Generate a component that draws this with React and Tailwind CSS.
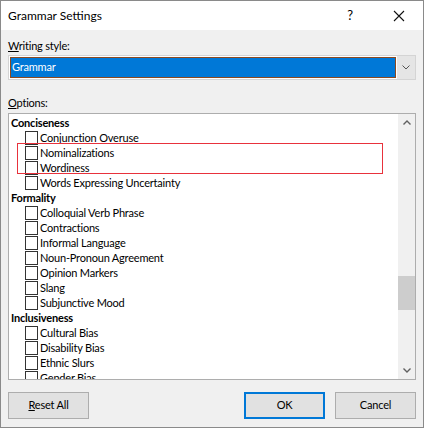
const groups = [
  {
    name: "Conciseness",
    items: ["Conjunction Overuse", "Nominalizations", "Wordiness", "Words Expressing Uncertainty"],
  },
  {
    name: "Formality",
    items: [
      "Colloquial Verb Phrase",
      "Contractions",
      "Informal Language",
      "Noun-Pronoun Agreement",
      "Opinion Markers",
      "Slang",
      "Subjunctive Mood",
    ],
  },
  {
    name: "Inclusiveness",
    items: ["Cultural Bias", "Disability Bias", "Ethnic Slurs", "Gender Bias"],
  },
];

function Row({ label }) {
  return (
    <div className="flex h-[15px] items-center pl-[14px]">
      <span className="h-[14px] w-[13px] shrink-0 border border-[#333] bg-white" />
      <span className="pl-[2px] leading-[15px]">{label}</span>
    </div>
  );
}

export default function App() {
  return (
    <div
      className="flex h-[428px] w-[424px] flex-col border border-[#8a8a8a] bg-[#f0f0f0] text-[11px] tracking-[-0.2px] text-black"
      style={{ fontFamily: '"Segoe UI", Lato, "Noto Sans", sans-serif' }}
    >
      {/* title bar */}
      <div className="flex h-[29px] shrink-0 items-center bg-white pl-[7px] tracking-normal">
        <span className="flex-1 text-[12px]">Grammar Settings</span>
        <span className="mr-[40px] text-[13px]">?</span>
        <svg width="12" height="12" viewBox="0 0 12 12" className="mr-[18px]">
          <path d="M1 1L11 11M11 1L1 11" stroke="#111" strokeWidth="1.1" />
        </svg>
      </div>

      <div className="flex flex-1 flex-col px-[7px]">
        <div className="mt-[8px] leading-[15px]">
          <span className="underline">W</span>riting style:
        </div>
        <div className="mt-[2px] flex h-[25px] border border-[#d4d4d4] bg-white">
          <div className="m-[1px] flex flex-1 items-center border border-[#8b4a22] bg-[#0078d7] pl-[1px] text-white">
            Grammar
          </div>
          <div className="flex w-[18px] items-center justify-center bg-[#e5e5e5]">
            <svg width="8" height="5" viewBox="0 0 8 5">
              <path d="M0.5 0.5L4 4L7.5 0.5" fill="none" stroke="#555" strokeWidth="1" />
            </svg>
          </div>
        </div>

        <div className="mt-[15px] leading-[15px]">
          <span className="underline">O</span>ptions:
        </div>

        <div className="mt-[3px] flex h-[267px] overflow-hidden border border-[#adadad] bg-white">
          <div className="relative flex-1 overflow-hidden pt-[1px] pl-[2px]">
            {groups.map((g) => (
              <div key={g.name}>
                <div className="h-[15px] font-bold leading-[15px]">{g.name}</div>
                {g.items.map((it) => (
                  <Row key={it} label={it} />
                ))}
              </div>
            ))}
            <div className="absolute left-[8px] top-[29px] h-[31px] w-[366px] border-[1.5px] border-[#e8323c]" />
          </div>
          <div className="flex w-[17px] flex-col bg-[#f0f0f0]">
            <div className="flex h-[17px] items-center justify-center">
              <svg width="8" height="5" viewBox="0 0 8 5">
                <path d="M0.5 4.5L4 1L7.5 4.5" fill="none" stroke="#606060" strokeWidth="1.4" />
              </svg>
            </div>
            <div className="mt-[145px] h-[34px] bg-[#cdcdcd]" />
            <div className="flex-1" />
            <div className="flex h-[17px] items-center justify-center">
              <svg width="8" height="5" viewBox="0 0 8 5">
                <path d="M0.5 0.5L4 4L7.5 0.5" fill="none" stroke="#606060" strokeWidth="1.4" />
              </svg>
            </div>
          </div>
        </div>

        <div className="mt-[12px] flex">
          <button className="h-[27px] w-[81px] border border-[#adadad] bg-[#e1e1e1]">
            <span className="underline">R</span>eset All
          </button>
          <div className="flex-1" />
          <button className="h-[27px] w-[81px] border-2 border-[#0078d7] bg-[#e1e1e1]">OK</button>
          <button className="ml-[10px] h-[27px] w-[81px] border border-[#adadad] bg-[#e1e1e1]">Cancel</button>
        </div>
      </div>
    </div>
  );
}
